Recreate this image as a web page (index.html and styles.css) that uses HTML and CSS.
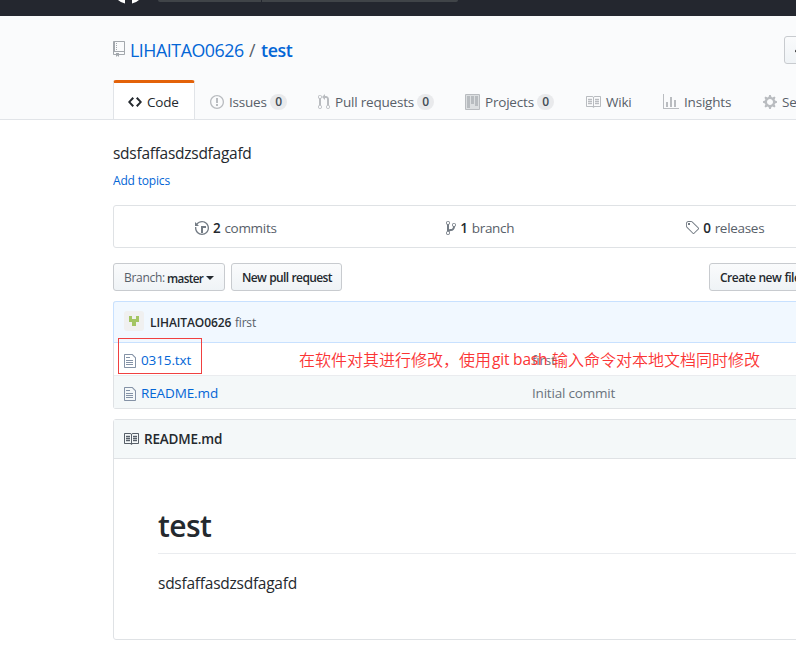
FILE: index.html
```html
<!DOCTYPE html>
<html lang="en">
<head>
<meta charset="utf-8">
<title>LIHAITAO0626/test</title>
<link rel="stylesheet" href="styles.css">
</head>
<body>
<svg class="defs" width="0" height="0">
  <symbol id="repo" viewBox="0 0 12 16"><path fill-rule="evenodd" d="M4 9H3V8h1v1zm0-3H3v1h1V6zm0-2H3v1h1V4zm0-2H3v1h1V2zm8-1v12c0 .55-.45 1-1 1H6v2l-1.5-1.5L3 16v-2H1c-.55 0-1-.45-1-1V1c0-.55.45-1 1-1h10c.55 0 1 .45 1 1zm-1 10H1v2h2v-1h3v1h5v-2zm0-10H2v9h9V1z"/></symbol>
  <symbol id="code" viewBox="0 0 14 16"><path fill-rule="evenodd" d="M9.500 3L8 4.500 11.500 8 8 11.500 9.500 13 14 8 9.500 3zm-5 0L0 8l4.500 5L6 11.500 2.500 8 6 4.500 4.500 3z"/></symbol>
  <symbol id="issue" viewBox="0 0 14 16"><path fill-rule="evenodd" d="M7 2.300c3.140 0 5.700 2.560 5.700 5.700s-2.560 5.700-5.700 5.700A5.710 5.710 0 0 1 1.300 8c0-3.140 2.560-5.700 5.700-5.700zM7 1C3.140 1 0 4.140 0 8s3.140 7 7 7 7-3.140 7-7-3.140-7-7-7zm1 3H6v5h2V4zm0 6H6v2h2v-2z"/></symbol>
  <symbol id="pull" viewBox="0 0 12 16"><path fill-rule="evenodd" d="M11 11.280V5c-.03-.78-.34-1.470-.94-2.060C9.460 2.350 8.780 2.030 8 2H7V0L4 3l3 3V4h1c.27.02.48.11.69.31.21.2.3.42.31.69v6.280A1.993 1.993 0 0 0 10 15a1.993 1.993 0 0 0 1-3.720zm-1 2.920c-.66 0-1.200-.55-1.200-1.200 0-.65.55-1.200 1.200-1.200.65 0 1.200.55 1.200 1.200 0 .65-.55 1.200-1.200 1.200zM4 3c0-1.110-.89-2-2-2a1.993 1.993 0 0 0-1 3.720v6.560A1.993 1.993 0 0 0 2 15a1.993 1.993 0 0 0 1-3.720V4.720c.59-.34 1-.98 1-1.720zm-.8 10c0 .66-.55 1.200-1.200 1.200-.65 0-1.200-.55-1.200-1.200 0-.65.55-1.200 1.200-1.200.65 0 1.200.55 1.200 1.200zM2 4.200C1.340 4.200.8 3.650.8 3c0-.65.55-1.200 1.200-1.200.65 0 1.200.55 1.200 1.200 0 .65-.55 1.200-1.200 1.200z"/></symbol>
  <symbol id="project" viewBox="0 0 15 16"><path fill-rule="evenodd" d="M10 12h3V2h-3v10zm-4-2h3V2H6v8zm-4 4h3V2H2v12zm-1 1h13V1H1v14zM14 0H1a1 1 0 0 0-1 1v14a1 1 0 0 0 1 1h13a1 1 0 0 0 1-1V1a1 1 0 0 0-1-1z"/><path opacity=".45" d="M1 1h13v14H1z"/></symbol>
  <symbol id="book" viewBox="0 0 16 16"><path fill-rule="evenodd" d="M3 5h4v1H3V5zm0 3h4V7H3v1zm0 2h4V9H3v1zm11-5h-4v1h4V5zm0 2h-4v1h4V7zm0 2h-4v1h4V9zm2-6v9c0 .55-.45 1-1 1H9.500l-1 1-1-1H2c-.55 0-1-.45-1-1V3c0-.55.45-1 1-1h5.500l1 1 1-1H15c.55 0 1 .45 1 1zm-8 .5L7.500 3H2v9h6V3.500zm7-.5H9.500l-.5.500V12h6V3z"/><path opacity=".4" d="M3 4.500h4v6H3zM10 4.500h4v6h-4z"/></symbol>
  <symbol id="graph" viewBox="0 0 16 16"><path fill-rule="evenodd" d="M16 14v1H0V0h1v14h15zM5 13H3V8h2v5zm4 0H7V3h2v10zm4 0h-2V6h2v7z"/></symbol>
  <symbol id="gear" viewBox="0 0 14 16"><path fill-rule="evenodd" d="M14 8.770v-1.600l-1.940-.64-.45-1.090.88-1.840-1.130-1.130-1.810.91-1.090-.45-.69-1.920h-1.600l-.63 1.940-1.110.45-1.840-.88-1.130 1.130.91 1.810-.45 1.090L0 7.230v1.590l1.940.64.45 1.090-.88 1.840 1.130 1.130 1.810-.91 1.090.45.69 1.920h1.590l.63-1.940 1.110-.45 1.840.88 1.130-1.130-.92-1.810.47-1.090L14 8.750v.02zM7 11c-1.660 0-3-1.340-3-3s1.340-3 3-3 3 1.340 3 3-1.340 3-3 3z"/></symbol>
  <symbol id="history" viewBox="0 0 14 16"><path fill-rule="evenodd" d="M8 13H6V6h5v2H8v5zM7 1C4.810 1 2.870 2.020 1.590 3.590L0 2v4h4L2.500 4.500C3.550 3.170 5.170 2.300 7 2.300c3.140 0 5.700 2.560 5.700 5.700s-2.560 5.700-5.700 5.700A5.710 5.710 0 0 1 1.300 8c0-.34.03-.67.09-1H.08C.03 7.330 0 7.660 0 8c0 3.860 3.140 7 7 7s7-3.140 7-7-3.140-7-7-7z"/></symbol>
  <symbol id="branch" viewBox="0 0 10 16"><path fill-rule="evenodd" d="M10 5c0-1.110-.89-2-2-2a1.993 1.993 0 0 0-1 3.720v.3c-.02.52-.23.98-.63 1.380-.4.4-.86.61-1.380.63-.83.02-1.480.16-2 .45V4.720a1.993 1.993 0 0 0-1-3.720C.88 1 0 1.890 0 3a2 2 0 0 0 1 1.720v6.560c-.59.35-1 .99-1 1.720 0 1.110.89 2 2 2 1.110 0 2-.89 2-2 0-.53-.2-1-.53-1.360.09-.06.48-.41.59-.47.25-.11.56-.17.94-.17 1.050-.05 1.950-.45 2.750-1.250S8.950 7.770 9 6.730h-.02C9.590 6.370 10 5.730 10 5zM2 1.800c.66 0 1.200.55 1.200 1.200 0 .65-.55 1.200-1.200 1.200C1.350 4.200.8 3.650.8 3c0-.65.55-1.200 1.200-1.200zm0 12.410c-.66 0-1.200-.55-1.200-1.200 0-.65.55-1.200 1.200-1.200.65 0 1.200.55 1.200 1.200 0 .65-.55 1.200-1.200 1.200zm6-8c-.66 0-1.200-.55-1.200-1.200 0-.65.55-1.200 1.200-1.200.65 0 1.200.55 1.200 1.200 0 .65-.55 1.200-1.200 1.200z"/></symbol>
  <symbol id="tag" viewBox="0 0 14 16"><path fill-rule="evenodd" d="M7.730 1.730C7.260 1.260 6.620 1 5.960 1H3.500C2.130 1 1 2.130 1 3.500v2.470c0 .66.27 1.300.73 1.770l6.060 6.060c.39.39 1.020.39 1.410 0l4.590-4.590a.996.996 0 0 0 0-1.410L7.730 1.730zM2.380 7.090c-.31-.3-.47-.7-.47-1.130V3.500c0-.88.72-1.590 1.590-1.590h2.470c.42 0 .83.16 1.130.47l6.140 6.130-4.730 4.730-6.130-6.150zM3.010 3h2v2H3V3h.01z"/></symbol>
  <symbol id="file" viewBox="0 0 12 16"><path fill-rule="evenodd" d="M6 5H2V4h4v1zM2 8h7V7H2v1zm0 2h7V9H2v1zm0 2h7v-1H2v1zm10-7.500V14c0 .55-.45 1-1 1H1c-.55 0-1-.45-1-1V2c0-.55.45-1 1-1h7.500L12 4.500zM11 5L8 2H1v12h10V5z"/></symbol>
</svg>

<header class="topbar">
  <svg class="mark" width="32" height="5" viewBox="0 0 32 5"><path d="M5 0h7v3.500Q8 2.800 5 0zM19 0h7q-3 2.800-7 3.500z"/></svg>
  <div class="search"><div class="search-scope"></div></div>
</header>

<div class="repohead">
  <div class="titlebar">
    <svg class="ic repo-ic" width="12" height="16"><use href="#repo"/></svg>
    <a class="owner">LIHAITAO0626</a><span class="slash">/</span><a class="name">test</a>
    <div class="watch btn"><svg width="16" height="16" viewBox="0 0 16 16"><path d="M8.060 2C3 2 0 8 0 8s3 6 8.060 6C13 14 16 8 16 8s-3-6-7.940-6zM8 12c-2.200 0-4-1.780-4-4 0-2.200 1.800-4 4-4 2.220 0 4 1.800 4 4 0 2.220-1.780 4-4 4z"/></svg></div>
  </div>
  <nav class="tabs">
    <a class="tab selected"><svg class="ic" width="14" height="16"><use href="#code"/></svg><span>Code</span></a>
    <a class="tab w-issues"><svg class="ic" width="14" height="16"><use href="#issue"/></svg><span>Issues</span><b class="count">0</b></a>
    <a class="tab w-pulls"><svg class="ic" width="12" height="16"><use href="#pull"/></svg><span>Pull requests</span><b class="count">0</b></a>
    <a class="tab w-projects"><svg class="ic" width="15" height="16"><use href="#project"/></svg><span>Projects</span><b class="count">0</b></a>
    <a class="tab w-wiki"><svg class="ic" width="16" height="16"><use href="#book"/></svg><span>Wiki</span></a>
    <a class="tab w-insights"><svg class="ic" width="16" height="16"><use href="#graph"/></svg><span>Insights</span></a>
    <a class="tab"><svg class="ic" width="14" height="16"><use href="#gear"/></svg><span>Settings</span></a>
  </nav>
</div>

<main class="content">
  <p class="desc">sdsfaffasdzsdfagafd</p>
  <a class="topics">Add topics</a>

  <div class="summary">
    <div class="stat"><svg class="ic" width="14" height="16"><use href="#history"/></svg><b>2</b><span>commits</span></div>
    <div class="stat"><svg class="ic" width="10" height="16"><use href="#branch"/></svg><b>1</b><span>branch</span></div>
    <div class="stat"><svg class="ic" width="14" height="16"><use href="#tag"/></svg><b>0</b><span>releases</span></div>
    <div class="stat"></div>
  </div>

  <div class="actions">
    <div class="btn branch-btn"><span class="muted">Branch:</span><b>master</b><i class="caret"></i></div>
    <div class="btn pr-btn">New pull request</div>
    <div class="btn create-btn">Create new file</div>
  </div>

  <section class="files">
    <div class="commit">
      <svg class="avatar" width="20" height="20" viewBox="0 0 20 20"><rect width="20" height="20" rx="3" fill="#f0f0f0"/><path fill="#a3c563" d="M5 5h3v3h4V5h3v6h-3v4H8v-4H5z"/></svg>
      <b>LIHAITAO0626</b><span>first</span>
    </div>
    <div class="row"><svg class="ic" width="12" height="16"><use href="#file"/></svg><a>0315.txt</a><span class="msg">first</span>
      <div class="mark-box"></div>
      <div class="note"><span class="cjk">在软件对其进行修改，使用</span><span class="latin">git bash</span><span class="cjk">输入命令对本地文档同时修改</span></div>
    </div>
    <div class="row alt"><svg class="ic" width="12" height="16"><use href="#file"/></svg><a>README.md</a><span class="msg">Initial commit</span></div>
  </section>

  <section class="readme">
    <div class="readme-head"><svg class="ic" width="16" height="16"><use href="#book"/></svg><b>README.md</b></div>
    <article class="body">
      <h1>test</h1>
      <p class="desc-text">sdsfaffasdzsdfagafd</p>
    </article>
  </section>
</main>
</body>
</html>
```

FILE: styles.css
```css
* { box-sizing: border-box; }
html, body { overflow: hidden; }
body {
  margin: 0;
  height: 664px;
  background: #fff;
  color: #24292e;
  font: 13.5px/20px "Open Sans", "Noto Sans", "Noto Sans CJK SC", sans-serif;
  letter-spacing: -.2px;
  white-space: nowrap;
}
b { font-weight: 600; }
p, h1 { margin: 0; }
a { color: #0366d6; }
svg { display: block; flex: none; }
.defs { position: absolute; }
.ic { fill: currentColor; }

.topbar { display: flex; align-items: flex-start; height: 16px; padding-left: 113px; background: #24272f; }
.mark { fill: #fff; }
.search { width: 300px; height: 2px; margin-left: 13px; background: #404448; border-radius: 0 0 3px 3px; }
.search-scope { width: 104px; height: 2px; border-right: 1px solid #24272f; }

.repohead { width: 100%; height: 104px; overflow: hidden; background: #fafbfc; border-bottom: 1px solid #e1e4e8; }
.titlebar { display: flex; align-items: center; height: 64px; padding: 4px 0 0 113px; font-size: 17.8px; line-height: 28px; letter-spacing: -.45px; }
.titlebar > * { flex: none; }
.repo-ic { color: #a3a8ad; margin: -2px 5px 0 0; }
.owner { width: 114px; }
.slash { width: 17px; padding-left: 5px; color: #586069; }
.name { width: 30px; font-weight: 600; letter-spacing: -.4px; }

.btn {
  display: flex; align-items: center; height: 28px; padding: 1px 10px 0;
  border: 1px solid #c8cbcf; border-radius: 3px;
  background: linear-gradient(#fafbfc, #eff3f6);
  font-size: 12px; font-weight: 600; letter-spacing: -.4px;
}
.watch { margin-left: 493px; width: 90px; }

.tabs { display: flex; height: 40px; padding-left: 113px; }
.tab { display: flex; flex: none; align-items: center; padding: 4px 0 0 16px; color: #586069; border-bottom: 1px solid #e1e4e8; }
.tab .ic { color: #b9bcc0; margin: 0 5px 0 -1px; }
.tab.selected { width: 82px; padding: 1px 0 0 15px; background: #fff; color: #24292e; border: 1px solid #e1e4e8; border-top: 3px solid #e36209; border-bottom: 0; border-radius: 3px 3px 0 0; }
.tab.selected .ic { color: #24292e; }
.w-issues { width: 108px; }
.w-pulls { width: 147px; }
.w-projects { width: 120px; }
.w-wiki { width: 78px; }
.w-insights { width: 100px; }
.count { margin: 0 16px 0 auto; width: 17px; height: 16px; border-radius: 9px; background: #e9eaec; color: #444d56; font-size: 12px; line-height: 16px; text-align: center; }

.content { width: 683px; margin-left: 113px; overflow: hidden; }
.summary, .actions, .files, .readme { width: 980px; }
.desc { padding-top: 21px; height: 50px; font-size: 15.5px; line-height: 24px; letter-spacing: -.27px; }
.topics { display: block; height: 35px; font-size: 12px; line-height: 22px; letter-spacing: -.18px; }

.summary { display: flex; height: 43px; border: 1px solid #dfe2e5; border-radius: 3px; }
.stat { display: flex; flex: 1; align-items: center; justify-content: center; padding: 2px 1px 0 0; color: #586069; letter-spacing: -.3px; }
.stat .ic { color: #737b84; }
.stat b { margin: 0 4px; color: #24292e; }

.actions { display: flex; margin-top: 15px; }
.branch-btn { width: 112px; }
.branch-btn b { margin-left: 3px; width: 36px; font-size: 11.7px; letter-spacing: -.65px; }
.muted { width: 40px; color: #586069; font-weight: 400; letter-spacing: -.3px; }
.caret { margin-left: 3px; border: 4px solid transparent; border-top-color: currentColor; border-bottom: 0; }
.pr-btn { margin-left: 6px; width: 111px; letter-spacing: -.62px; }
.create-btn { margin-left: 367px; width: 104px; letter-spacing: -.5px; }

.pr-btn, .create-btn { word-spacing: 0.5px; }

.files { margin-top: 10px; height: 108px; border: 1px solid #dfe2e5; border-top: 0; border-radius: 3px; }
.commit { display: flex; align-items: center; height: 42px; margin: 0 -1px; padding: 1px 10px 0 11px; background: #f1f8ff; border: 1px solid #c8e1ff; border-radius: 3px 3px 0 0; font-size: 12px; }
.commit .avatar { margin: -3px 6px 0 -1px; }
.commit span { margin-left: 3px; color: #586069; }
.commit b { width: 82px; letter-spacing: -.1px; }
.row { position: relative; display: flex; align-items: center; height: 32px; padding: 1px 0 0 10px; }
.row .ic { color: #8492a6; margin: 2px 5px 0 0; }
.row a { width: 391px; letter-spacing: -.12px; }
.msg { color: #6a737d; }
.alt { height: 33px; background: #f4f8f9; border-top: 1px solid #eaecef; }
.mark-box { position: absolute; left: 4px; top: -5px; width: 84px; height: 36px; border: 1px solid #f04040; }
.note { position: absolute; left: 185px; top: 4px; display: flex; color: #fb3535; font-size: 16px; line-height: 24px; letter-spacing: 0; }
.note .cjk { font-family: "Noto Sans CJK SC", sans-serif; font-weight: 350; }
.note .latin { width: 61px; padding-left: 1px; font-size: 15.500px; letter-spacing: -.2px; }

.readme { margin-top: 10px; height: 221px; border: 1px solid #dfe2e5; border-radius: 3px; }
.readme-head { display: flex; align-items: center; height: 39px; padding-left: 9px; background: #f4f8f9; border-bottom: 1px solid #dfe2e5; }
.readme-head .ic { color: #586069; margin-right: 5px; }
.body { padding: 45px 45px 45px 44px; }
h1 { height: 50px; border-bottom: 1px solid #eaecef; font-size: 30px; font-weight: 600; line-height: 44px; letter-spacing: -.6px; }
.desc-text { margin-top: 17px; font-size: 15.5px; line-height: 24px; letter-spacing: -.25px; }
```
